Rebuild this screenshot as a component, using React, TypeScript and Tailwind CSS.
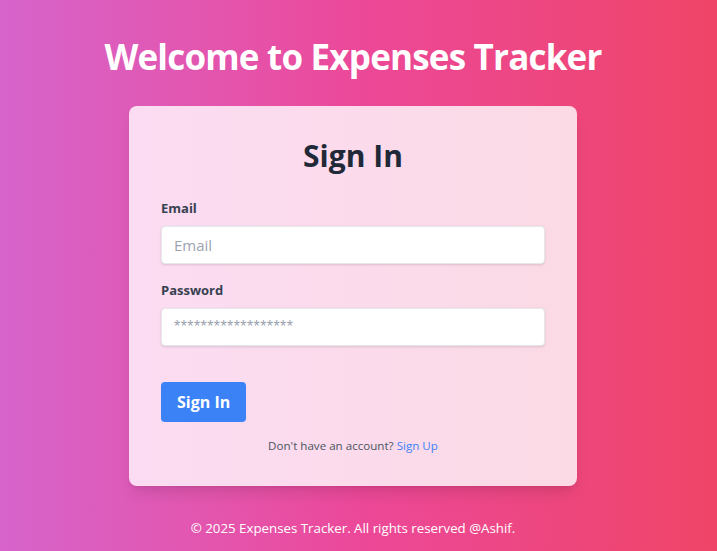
import React, { useState } from 'react';

export default function App() {
  const [email, setEmail] = useState('');
  const [password, setPassword] = useState('');

  return (
    <div className="min-h-screen w-full bg-gradient-to-r from-[#d663cb] via-[#ec4899] to-[#ef4467] font-['Open_Sans','Noto_Sans',sans-serif]">
      <div className="flex w-[706px] flex-col items-center">
        <h1 className="mt-[33px] mb-[25px] text-[35px] leading-[48px] font-bold text-white tracking-[-0.8px]">
          Welcome to Expenses Tracker
        </h1>

        <div className="w-[448px] rounded-lg bg-gradient-to-r from-[#fbdcf2] to-[#fbdae5] px-8 pt-8 pb-[30px] shadow-lg">
          <h2 className="mb-6 text-center text-3xl leading-9 font-bold text-[#1f2937]">Sign In</h2>

          <form onSubmit={(e) => e.preventDefault()}>
            <div className="mb-4">
              <label className="mb-2 block text-[13px] leading-5 font-bold text-[#374151]" htmlFor="email">
                Email
              </label>
              <input
                id="email"
                type="email"
                placeholder="Email"
                value={email}
                onChange={(e) => setEmail(e.target.value)}
                className="w-full appearance-none rounded border border-[#e5e7eb] bg-white px-3 py-2 text-[15px] leading-5 text-[#374151] shadow placeholder:text-[#9ca3af] focus:outline-none"
              />
            </div>

            <div className="mb-9">
              <label className="mb-2 block text-[13px] leading-5 font-bold text-[#374151]" htmlFor="password">
                Password
              </label>
              <input
                id="password"
                type="password"
                placeholder="******************"
                value={password}
                onChange={(e) => setPassword(e.target.value)}
                className="w-full appearance-none rounded border border-[#e5e7eb] bg-white px-3 py-2 font-['Liberation_Sans',sans-serif] text-base leading-5 tracking-[0.4px] text-[#374151] shadow placeholder:text-[#9ca3af] focus:outline-none"
              />
            </div>

            <button
              type="submit"
              className="rounded bg-[#3b82f6] px-4 py-2 text-base leading-6 font-bold text-white hover:bg-[#1d4ed8]"
            >
              Sign In
            </button>

            <p className="mt-[14px] text-center text-[11.6px] leading-5 text-[#4b5563]">
              Don't have an account?{' '}
              <a href="#" className="text-[#3b82f6]">
                Sign Up
              </a>
            </p>
          </form>
        </div>

        <footer className="mt-8 text-[13.3px] leading-5 text-white">
          © 2025 Expenses Tracker. All rights reserved @Ashif.
        </footer>
      </div>
    </div>
  );
}
